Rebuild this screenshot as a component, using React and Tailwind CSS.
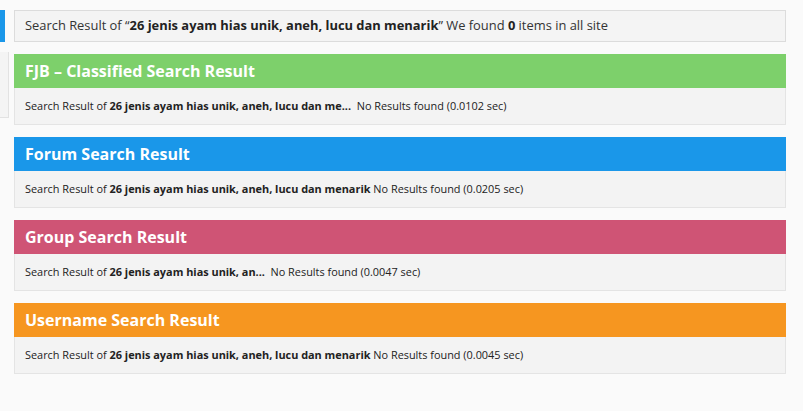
import React from 'react';

const sections = [
  { title: 'FJB – Classified Search Result', color: 'bg-[#7dd06b]', query: '26 jenis ayam hias unik, aneh, lucu dan me...', time: '0.0102' },
  { title: 'Forum Search Result', color: 'bg-[#1a97e9]', query: '26 jenis ayam hias unik, aneh, lucu dan menarik', time: '0.0205' },
  { title: 'Group Search Result', color: 'bg-[#cf5475]', query: '26 jenis ayam hias unik, an...', time: '0.0047' },
  { title: 'Username Search Result', color: 'bg-[#f69620]', query: '26 jenis ayam hias unik, aneh, lucu dan menarik', time: '0.0045' },
];

const ResultSection = ({ title, color, query, time }) => (
  <div className="flex flex-col">
    <div className={`${color} h-[34px] flex items-center px-[11px]`}>
      <h2 className="text-[16px] font-bold text-white leading-none -mt-px">{title}</h2>
    </div>
    <div className="h-[37px] bg-[#f3f3f3] border border-t-0 border-[#e4e4e4] flex items-center px-[10px] text-[10.9px] text-[#222]">
      <span>
        Search Result of <b>{query}</b>{query.endsWith('...') ? '\u00a0 ' : ' '}No Results found ({time} sec)
      </span>
    </div>
  </div>
);

export default function App() {
  return (
    <div className="w-[803px] h-[411px] bg-[#fafafa] relative overflow-hidden" style={{ fontFamily: '"Open Sans", sans-serif' }}>
      {/* left edge remnants */}
      <div className="absolute left-0 top-[10px] w-[5px] h-[32px] bg-[#1a97e9]" />
      <div className="absolute left-0 top-[52px] w-[9px] h-[66px] bg-[#f4f4f4] border-r border-b border-[#e2e2e2]" />

      <div className="ml-[14px] w-[772px] pt-[10px] flex flex-col gap-[12px]">
        <div className="h-[32px] bg-[#f4f4f4] border border-[#dcdcdc] flex items-center px-[10px] text-[12.9px] text-[#333]">
          <span>
            Search Result of “<b className="text-[#222]">26 jenis ayam hias unik, aneh, lucu dan menarik</b>” We found <b className="text-[#222]">0</b> items in all site
          </span>
        </div>
        {sections.map((s) => (
          <ResultSection key={s.title} {...s} />
        ))}
      </div>
    </div>
  );
}
